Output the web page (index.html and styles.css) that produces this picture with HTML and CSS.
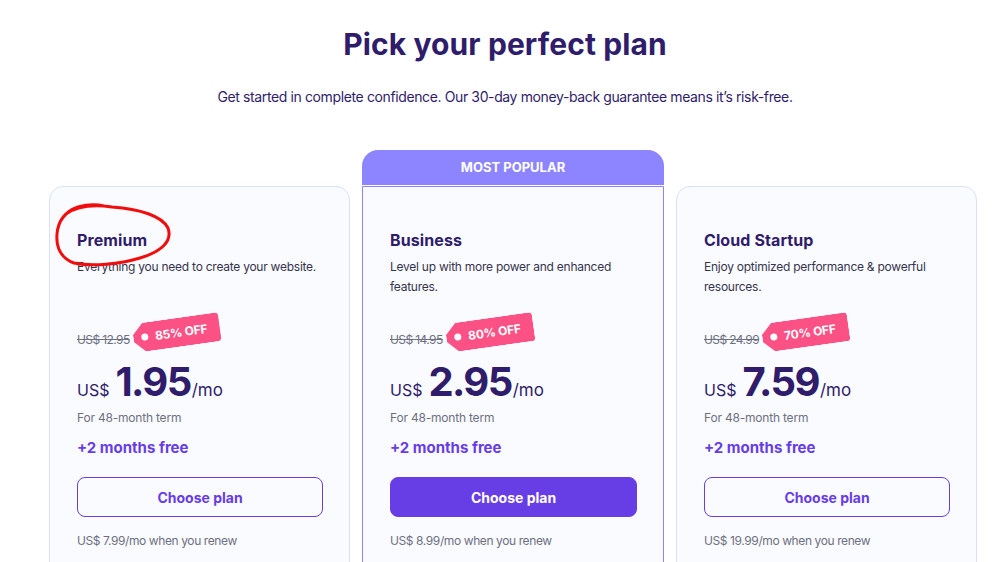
FILE: index.html
```html
<!DOCTYPE html>
<html lang="en">
<head>
<meta charset="utf-8">
<title>Pick your perfect plan</title>
<link rel="stylesheet" href="styles.css">
</head>
<body>
<main class="page">
  <h1 class="heading">Pick your perfect plan</h1>
  <p class="subtitle">Get started in complete confidence. Our 30-day money-back guarantee means it’s risk-free.</p>

  <div class="plans">
    <section class="plan">
      <div class="card">
        <h2 class="plan-name">Premium</h2>
        <p class="plan-desc">Everything you need to create your website.</p>
        <div class="old-row">
          <span class="old-price">US$ 12.95</span>
          <span class="tag">85% OFF</span>
        </div>
        <div class="price-row">
          <span class="cur">US$</span><span class="amount">1.95</span><span class="per">/mo</span>
        </div>
        <p class="term">For 48-month term</p>
        <p class="bonus">+2 months free</p>
        <button class="btn btn-outline">Choose plan</button>
        <p class="renew">US$ 7.99/mo when you renew</p>
      </div>
    </section>

    <section class="plan plan-popular">
      <div class="popular-head">MOST POPULAR</div>
      <div class="card card-popular">
        <h2 class="plan-name">Business</h2>
        <p class="plan-desc">Level up with more power and enhanced features.</p>
        <div class="old-row">
          <span class="old-price">US$ 14.95</span>
          <span class="tag">80% OFF</span>
        </div>
        <div class="price-row">
          <span class="cur">US$</span><span class="amount">2.95</span><span class="per">/mo</span>
        </div>
        <p class="term">For 48-month term</p>
        <p class="bonus">+2 months free</p>
        <button class="btn btn-solid">Choose plan</button>
        <p class="renew">US$ 8.99/mo when you renew</p>
      </div>
    </section>

    <section class="plan">
      <div class="card">
        <h2 class="plan-name">Cloud Startup</h2>
        <p class="plan-desc">Enjoy optimized performance &amp; powerful resources.</p>
        <div class="old-row">
          <span class="old-price">US$ 24.99</span>
          <span class="tag">70% OFF</span>
        </div>
        <div class="price-row">
          <span class="cur">US$</span><span class="amount">7.59</span><span class="per">/mo</span>
        </div>
        <p class="term">For 48-month term</p>
        <p class="bonus">+2 months free</p>
        <button class="btn btn-outline">Choose plan</button>
        <p class="renew">US$ 19.99/mo when you renew</p>
      </div>
    </section>
  </div>
</main>

<svg class="scribble" width="1006" height="562" viewBox="0 0 1006 562" aria-hidden="true">
  <path d="M66 214 C 80 204, 98 205, 112 207 C 140 209, 162 216, 168 228 C 173 242, 160 252, 140 258 C 120 264, 92 267, 74 263 C 60 258, 56 246, 57 234 C 58 222, 64 212, 78 207 C 88 204, 96 204, 104 206"
        fill="none" stroke="#f20d0d" stroke-width="3" stroke-linecap="round" stroke-linejoin="round"/>
</svg>
</body>
</html>
```

FILE: styles.css
```css
* { box-sizing: border-box; }

html, body {
  margin: 0;
  padding: 0;
  background: #ffffff;
  overflow: hidden;
}

body {
  font-family: "Inter", "DejaVu Sans", sans-serif;
  color: #2f1c6a;
  position: relative;
  height: 562px;
}

.page {
  display: flex;
  flex-direction: column;
}

.heading {
  margin: 24px 0 0;
  font-size: 30px;
  line-height: 40px;
  font-weight: 700;
  text-align: center;
  letter-spacing: 0.1px;
  padding-left: 4px;
  color: #2f1c6a;
}

.subtitle {
  margin: 23px 0 0;
  font-size: 14px;
  line-height: 20px;
  text-align: center;
  padding-left: 4px;
  letter-spacing: -0.38px;
  color: #2f1c6a;
}

.plans {
  display: flex;
  align-items: flex-start;
  gap: 12px;
  margin: 43px 0 0 49px;
}

.plan {
  width: 301px;
  margin-top: 36px;
  display: flex;
  flex-direction: column;
}

.plan-popular {
  width: 302px;
  margin-top: 0;
}

.popular-head {
  height: 35px;
  margin-bottom: 1px;
  background: #8c85ff;
  color: #ffffff;
  font-size: 13px;
  font-weight: 700;
  line-height: 35px;
  text-align: center;
  border-radius: 16px 16px 0 0;
}

.card {
  background: #fafbff;
  border: 1px solid #d8e0fb;
  border-radius: 14px;
  padding: 41px 26px 60px 27px;
  display: flex;
  flex-direction: column;
  align-items: flex-start;
}

.card-popular {
  border-color: #8c85ff;
  border-radius: 0 0 14px 14px;
}

.plan-name {
  margin: 0;
  font-size: 16px;
  line-height: 24px;
  font-weight: 700;
  letter-spacing: 0.1px;
  color: #2f1c6a;
}

.plan-desc {
  margin: 5px 0 0;
  font-size: 12px;
  line-height: 20px;
  letter-spacing: -0.25px;
  color: #36344d;
  min-height: 40px;
  max-width: 247px;
}

.old-row {
  margin-top: 14px;
  height: 38px;
  display: flex;
  align-items: flex-end;
}

.old-price {
  font-size: 12px;
  line-height: 18px;
  letter-spacing: -0.6px;
  color: #6d7081;
  text-decoration: line-through;
}

.tag {
  position: relative;
  display: inline-flex;
  align-items: center;
  height: 29px;
  padding: 0 13px 0 22px;
  margin-left: 3px;
  margin-bottom: -5px;
  background: #fc5185;
  color: #ffffff;
  font-size: 12px;
  font-weight: 700;
  letter-spacing: -0.2px;
  border-radius: 4px;
  clip-path: polygon(11px 0, 100% 0, 100% 100%, 11px 100%, 0 62%, 0 38%);
  transform: translateY(-7px) rotate(-8deg);
}

.tag::before {
  content: "";
  position: absolute;
  left: 8px;
  top: 11px;
  width: 7px;
  height: 7px;
  border-radius: 50%;
  background: #ffffff;
}

.price-row {
  margin-top: 14px;
  display: flex;
  align-items: baseline;
  line-height: 38px;
  color: #2f1c6a;
}

.cur {
  font-size: 16px;
  margin-right: 6px;
}

.amount {
  font-size: 40px;
  font-weight: 700;
  letter-spacing: -1.6px;
  margin-right: 1px;
}

.per {
  font-size: 17px;
}

.term {
  margin: 0;
  font-size: 12px;
  line-height: 18px;
  letter-spacing: -0.2px;
  color: #6d7081;
}

.bonus {
  margin: 10px 0 0;
  font-size: 15px;
  line-height: 22px;
  font-weight: 700;
  color: #673de6;
}

.btn {
  margin-top: 18px;
  width: 100%;
  height: 40px;
  border-radius: 8px;
  font-family: inherit;
  font-size: 14px;
  font-weight: 700;
  cursor: pointer;
}

.btn-outline {
  background: transparent;
  border: 1px solid #673de6;
  color: #673de6;
}

.btn-solid {
  background: #673de6;
  border: 1px solid #673de6;
  color: #ffffff;
}

.renew {
  margin: 15px 0 0;
  font-size: 12px;
  line-height: 18px;
  letter-spacing: -0.4px;
  color: #6d7081;
}

.scribble {
  position: absolute;
  top: 0;
  left: 0;
  pointer-events: none;
}
```
